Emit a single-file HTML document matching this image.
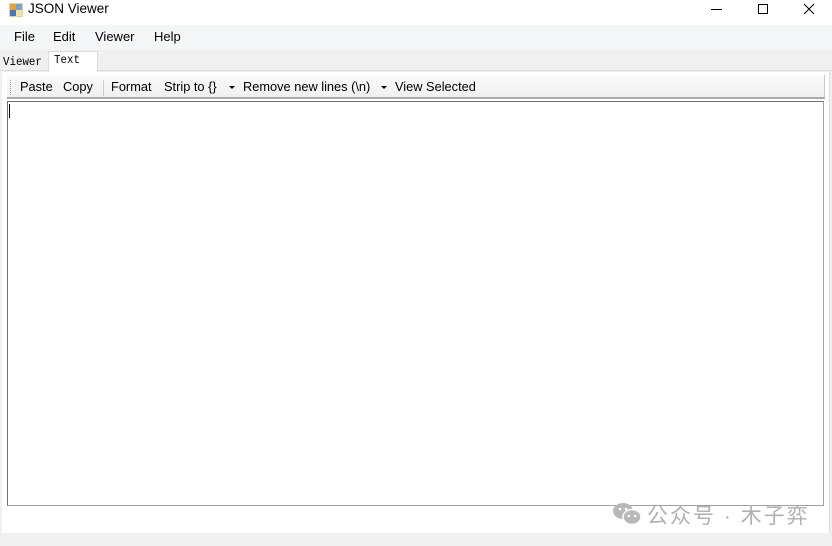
<!DOCTYPE html>
<html><head><style>
*{margin:0;padding:0;box-sizing:border-box}
body{width:832px;height:546px;background:#fff;font-family:"Segoe UI","Liberation Sans",sans-serif;font-size:13px;color:#000;position:relative;overflow:hidden}
.a{position:absolute}
.t{font-size:12.8px}
</style></head><body>
<div class="a" style="left:0;top:0;width:832px;height:25px;background:#fff"></div>
<svg class="a" style="left:9px;top:3px" width="14" height="14"><rect x="0" y="0" width="14" height="14" fill="#d9d2b0"/><rect x="1" y="1" width="6" height="6" fill="#e8a23a"/><rect x="7" y="1" width="6" height="6" fill="#7aa0d0"/><rect x="1" y="7" width="6" height="6" fill="#4a73b8"/><rect x="7" y="7" width="6" height="6" fill="#f0e2a0"/></svg>
<div class="a" style="left:28px;top:1px;font-size:13.5px">JSON Viewer</div>
<div class="a" style="left:711px;top:9px;width:11px;height:1px;background:#000"></div>
<div class="a" style="left:758px;top:4px;width:10px;height:10px;border:1px solid #000"></div>
<svg class="a" style="left:803px;top:3px" width="12" height="12"><path d="M1 1L11 11M11 1L1 11" stroke="#000" stroke-width="1"/></svg>
<div class="a" style="left:0;top:25px;width:832px;height:25px;background:#f5f6f7"></div>
<div class="a" style="left:14px;top:29px">File</div>
<div class="a" style="left:53px;top:29px">Edit</div>
<div class="a" style="left:95px;top:29px">Viewer</div>
<div class="a" style="left:154px;top:29px">Help</div>
<div class="a" style="left:0;top:50px;width:832px;height:496px;background:#f0f0f0"></div>
<div class="a" style="left:0;top:70px;width:832px;height:1px;background:#dcdcdc"></div>
<div class="a" style="left:3px;top:55px;font-family:'Liberation Mono',monospace;font-size:12px;transform:scaleX(0.9);transform-origin:left">Viewer</div>
<div class="a" style="left:48px;top:51px;width:50px;height:21px;background:#fff;border:1px solid #dcdcdc;border-bottom:none"></div>
<div class="a" style="left:54px;top:53px;font-family:'Liberation Mono',monospace;font-size:12px;transform:scaleX(0.9);transform-origin:left">Text</div>
<div class="a" style="left:2px;top:72px;width:828px;height:461px;background:#fff"></div>
<div class="a" style="left:7px;top:75px;width:818px;height:24px;background:linear-gradient(#fafafa,#f0f0f0);border-right:1px solid #c8c8c8;border-bottom:2px solid #a8a8a8"></div>
<div class="a" style="left:10px;top:80px;width:1px;height:15px;border-left:1px dotted #999"></div>
<div class="a t" style="left:20px;top:79px">Paste</div>
<div class="a t" style="left:63px;top:79px">Copy</div>
<div class="a" style="left:103px;top:80px;width:1px;height:16px;background:#ccc"></div>
<div class="a t" style="left:111px;top:79px">Format</div>
<div class="a t" style="left:164px;top:79px">Strip to {}</div>
<div class="a" style="left:229px;top:86px;border-left:3px solid transparent;border-right:3px solid transparent;border-top:3px solid #000"></div>
<div class="a t" style="left:243px;top:79px">Remove new lines (\n)</div>
<div class="a" style="left:381px;top:86px;border-left:3px solid transparent;border-right:3px solid transparent;border-top:3px solid #000"></div>
<div class="a t" style="left:395px;top:79px">View Selected</div>
<div class="a" style="left:7px;top:101px;width:817px;height:405px;border:1px solid #a0a0a0;border-top:1px solid #707070;border-left:1px solid #707070;background:#fff"></div>
<div class="a" style="left:9px;top:104px;width:1px;height:14px;background:#000"></div>
<div class="a" style="left:829px;top:72px;width:1px;height:461px;background:#ddd"></div>
<svg class="a" style="left:612px;top:502px" width="30" height="24"><ellipse cx="11" cy="9" rx="10" ry="8" fill="#b8b8b8"/><ellipse cx="20" cy="15" rx="9" ry="7.5" fill="#b8b8b8" stroke="#fff" stroke-width="1.5"/><circle cx="17" cy="14" r="1.3" fill="#fff"/><circle cx="23" cy="14" r="1.3" fill="#fff"/><circle cx="8" cy="7" r="1.3" fill="#fff"/><circle cx="14" cy="7" r="1.3" fill="#fff"/></svg>
<div class="a" style="left:647px;top:500px;font-size:21px;color:#b0b0b0;font-family:'Liberation Sans','Noto Sans CJK SC',sans-serif;letter-spacing:2px">公众号 · 木子弈</div>
</body></html>
